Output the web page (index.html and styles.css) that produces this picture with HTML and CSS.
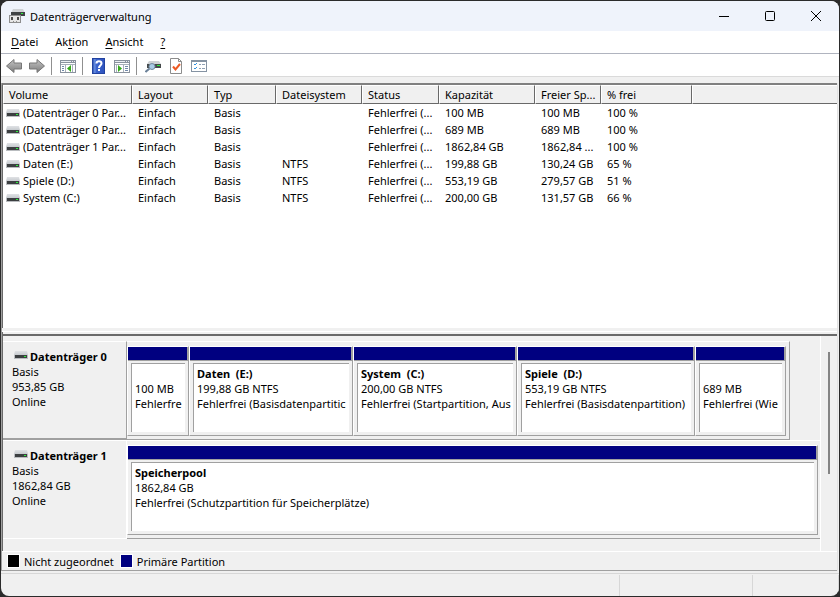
FILE: index.html
```html
<!DOCTYPE html>
<html lang="de">
<head>
  <meta charset="UTF-8" />
  <meta name="viewport" content="width=device-width, initial-scale=1.0" />
  <title>Datenträgerverwaltung</title>
  <link rel="stylesheet" href="styles.css">
</head>
<body>
  <!-- shared drive icon -->
  <svg class="defs" width="0" height="0">
    <defs>
      <linearGradient id="lid" x1="0" y1="0" x2="0" y2="1">
        <stop offset="0" stop-color="#e0e2e5" />
        <stop offset="1" stop-color="#c6cace" />
      </linearGradient>
      <linearGradient id="arrow" x1="0" y1="0" x2="0" y2="1">
        <stop offset="0" stop-color="#c4c4c4" />
        <stop offset="1" stop-color="#7c7c7c" />
      </linearGradient>
      <linearGradient id="blue" x1="0" y1="0" x2="1" y2="0">
        <stop offset="0" stop-color="#2347a8" />
        <stop offset="0.2" stop-color="#6d94e4" />
        <stop offset="0.3" stop-color="#3b64cd" />
        <stop offset="1" stop-color="#2e52bd" />
      </linearGradient>
      <symbol id="drive" viewBox="0 0 14 8">
        <path d="M1 0h12l1 4H0z" fill="url(#lid)" />
        <rect y="4" width="14" height="4" fill="#b9bcbf" />
        <rect x="1" y="4" width="12" height="3" fill="#3c3f41" />
        <rect x="10" y="5" width="2" height="1" fill="#2bf03a" />
      </symbol>
    </defs>
  </svg>

  <div class="window">
    <header class="titlebar">
      <svg class="app-icon" width="16" height="16" viewBox="0 0 16 16">
        <path d="M4 1h10l2 4H2z" fill="#cfd2d5" />
        <rect x="2" y="4" width="14" height="4" fill="#3f4244" />
        <rect x="12" y="5" width="2" height="1" fill="#2bf03a" />
        <rect x="0.500" y="7.500" width="11" height="7" fill="#e6e6e6" stroke="#8d8d8d" />
        <path d="M2 9h2v3H2zM8 9h2v3H8z" fill="#4a4a4a" />
        <path d="M4 13h1v1H4zM7 13h1v1H7z" fill="#8d8d8d" />
      </svg>
      <h1>Datenträgerverwaltung</h1>
      <div class="caption">
        <button aria-label="Minimieren"><svg width="10" height="10" viewBox="0 0 10 10"><path d="M0 5.5h10" /></svg></button>
        <button aria-label="Maximieren"><svg width="10" height="10" viewBox="0 0 10 10"><rect x="0.5" y="0.5" width="9" height="9" rx="1" /></svg></button>
        <button aria-label="Schließen"><svg width="10" height="10" viewBox="0 0 10 10"><path d="M0 0l10 10M10 0L0 10" /></svg></button>
      </div>
    </header>

    <nav class="menu">
      <button><u>D</u>atei</button>
      <button>Ak<u>t</u>ion</button>
      <button><u>A</u>nsicht</button>
      <button><u>?</u></button>
    </nav>

    <div class="toolbar">
      <button aria-label="Zurück"><svg width="16" height="16" viewBox="0 0 16 16">
        <path d="M0.5 8L8 1.5V5h7.5v6H8v3.5z" fill="url(#arrow)" stroke="#777" />
      </svg></button>
      <button aria-label="Vorwärts"><svg width="16" height="16" viewBox="0 0 16 16">
        <path d="M15.5 8L8 1.5V5H0.5v6H8v3.5z" fill="url(#arrow)" stroke="#777" />
      </svg></button>
      <span class="sep"></span>
      <button aria-label="Konsolenstruktur"><svg width="16" height="16" viewBox="0 0 16 16">
        <rect x="0.5" y="2.5" width="15" height="12" fill="#fff" stroke="#8a929e" />
        <rect x="0" y="2" width="16" height="3" fill="#8a929e" />
        <path d="M1 3.5h10M12 3.5h1M14 3.5h1" stroke="#e9edf2" />
        <path d="M1 6.5h14M5.5 7v7M12.5 7v7" stroke="#a8b0bb" />
        <path d="M2 8.5h2M2 10.5h2M2 12.5h2" stroke="#7289a9" />
        <path d="M11 7v7L7 10.5z" fill="#35a81c" />
      </svg></button>
      <span class="sep"></span>
      <button aria-label="Hilfe"><svg width="14" height="16" viewBox="0 0 14 16">
        <rect x="0.5" y="0.5" width="12" height="15" fill="url(#blue)" stroke="#2142a0" />
        <path d="M4.5 5.5C4.5 2.5 9.5 2.5 9.5 5.5C9.5 7.5 7 7.5 7 10" fill="none" stroke="#fff" stroke-width="2" />
        <rect x="6" y="11" width="2" height="2" fill="#fff" />
      </svg></button>
      <button aria-label="Aktionsbereich"><svg width="16" height="16" viewBox="0 0 16 16">
        <rect x="0.5" y="2.5" width="15" height="12" fill="#fff" stroke="#8a929e" />
        <rect x="0" y="2" width="16" height="3" fill="#8a929e" />
        <path d="M1 3.5h10M12 3.5h1M14 3.5h1" stroke="#e9edf2" />
        <path d="M1 6.5h14M2.5 7v7M9.5 7v7" stroke="#a8b0bb" />
        <path d="M11 8.5h3M11 10.5h3M11 12.5h3" stroke="#7289a9" />
        <path d="M4 7v7l4-3.5z" fill="#35a81c" />
      </svg></button>
      <span class="sep"></span>
      <button aria-label="Datenträger aktualisieren"><svg width="16" height="16" viewBox="0 0 16 16">
        <path d="M4 3h10l2 3H2z" fill="#cfd2d5" />
        <rect x="2" y="6" width="14" height="4" fill="#45494b" />
        <rect x="12" y="7" width="3" height="1" fill="#2bf03a" />
        <path d="M4.5 10.5L0.5 14" stroke="#6c8299" stroke-width="2" />
        <circle cx="7" cy="8.5" r="3" fill="#a9cbe6" stroke="#71899e" />
      </svg></button>
      <button aria-label="Eigenschaften"><svg width="14" height="16" viewBox="0 0 14 16">
        <path d="M1.5 0.5h8l3 3v12h-11z" fill="#fff" stroke="#8c8c8c" />
        <path d="M9.5 0.5v3h3" fill="none" stroke="#8c8c8c" />
        <path d="M4 8.5l2.5 3L11 6" fill="none" stroke="#ee5a24" stroke-width="2" />
      </svg></button>
      <button aria-label="Einstellungen"><svg width="16" height="16" viewBox="0 0 16 16">
        <rect x="0.5" y="2.5" width="15" height="11" fill="#fff" stroke="#8593a3" />
        <path d="M0 3h16" stroke="#8593a3" stroke-width="2" />
        <path d="M3 6l1 1 2-2M3 10l1 1 2-2" fill="none" stroke="#3192e0" />
        <path d="M8 6.5h2M11 6.5h3M8 10.5h2M11 10.5h3" stroke="#8fa0b3" />
      </svg></button>
    </div>

    <main>
      <section class="volumes">
        <table>
          <colgroup>
            <col class="c-volume"><col class="c-layout"><col class="c-type"><col class="c-fs"><col class="c-status"><col class="c-cap"><col class="c-free"><col class="c-pct"><col>
          </colgroup>
          <thead>
            <tr><th>Volume</th><th>Layout</th><th>Typ</th><th>Dateisystem</th><th>Status</th><th>Kapazität</th><th>Freier Sp...</th><th>% frei</th><th></th></tr>
          </thead>
          <tbody>
            <tr><td><svg class="drive"><use href="#drive" /></svg>(Datenträger 0 Par...</td><td>Einfach</td><td>Basis</td><td></td><td>Fehlerfrei (...</td><td>100 MB</td><td>100 MB</td><td>100 %</td><td></td></tr>
            <tr><td><svg class="drive"><use href="#drive" /></svg>(Datenträger 0 Par...</td><td>Einfach</td><td>Basis</td><td></td><td>Fehlerfrei (...</td><td>689 MB</td><td>689 MB</td><td>100 %</td><td></td></tr>
            <tr><td><svg class="drive"><use href="#drive" /></svg>(Datenträger 1 Par...</td><td>Einfach</td><td>Basis</td><td></td><td>Fehlerfrei (...</td><td>1862,84 GB</td><td>1862,84 ...</td><td>100 %</td><td></td></tr>
            <tr><td><svg class="drive"><use href="#drive" /></svg>Daten (E:)</td><td>Einfach</td><td>Basis</td><td>NTFS</td><td>Fehlerfrei (...</td><td>199,88 GB</td><td>130,24 GB</td><td>65 %</td><td></td></tr>
            <tr><td><svg class="drive"><use href="#drive" /></svg>Spiele (D:)</td><td>Einfach</td><td>Basis</td><td>NTFS</td><td>Fehlerfrei (...</td><td>553,19 GB</td><td>279,57 GB</td><td>51 %</td><td></td></tr>
            <tr><td><svg class="drive"><use href="#drive" /></svg>System (C:)</td><td>Einfach</td><td>Basis</td><td>NTFS</td><td>Fehlerfrei (...</td><td>200,00 GB</td><td>131,57 GB</td><td>66 %</td><td></td></tr>
          </tbody>
        </table>
      </section>

      <section class="graphical">
        <div class="disks">
          <div class="disk">
            <div class="disk-label">
              <h2><svg class="drive"><use href="#drive" /></svg>Datenträger 0</h2>
              <p>Basis</p>
              <p>953,85 GB</p>
              <p>Online</p>
            </div>
            <div class="partitions short">
              <div class="partition p-efi"><div class="bar"></div><div class="info"><h3></h3><p>100 MB</p><p>Fehlerfre</p></div></div>
              <div class="partition p-daten"><div class="bar"></div><div class="info"><h3>Daten &nbsp;(E:)</h3><p>199,88 GB NTFS</p><p>Fehlerfrei (Basisdatenpartitic</p></div></div>
              <div class="partition p-system"><div class="bar"></div><div class="info"><h3>System &nbsp;(C:)</h3><p>200,00 GB NTFS</p><p>Fehlerfrei (Startpartition, Aus</p></div></div>
              <div class="partition p-spiele"><div class="bar"></div><div class="info"><h3>Spiele &nbsp;(D:)</h3><p>553,19 GB NTFS</p><p>Fehlerfrei (Basisdatenpartition)</p></div></div>
              <div class="partition p-recovery"><div class="bar"></div><div class="info"><h3></h3><p>689 MB</p><p>Fehlerfrei (Wie</p></div></div>
            </div>
          </div>
          <div class="disk">
            <div class="disk-label">
              <h2><svg class="drive"><use href="#drive" /></svg>Datenträger 1</h2>
              <p>Basis</p>
              <p>1862,84 GB</p>
              <p>Online</p>
            </div>
            <div class="partitions">
              <div class="partition p-pool"><div class="bar"></div><div class="info"><h3>Speicherpool</h3><p>1862,84 GB</p><p>Fehlerfrei (Schutzpartition für Speicherplätze)</p></div></div>
            </div>
          </div>
        </div>
        <div class="scroll"><div class="thumb"></div></div>
      </section>

      <div class="legend">
        <span class="swatch unallocated"></span>Nicht zugeordnet
        <span class="swatch primary"></span>Primäre Partition
      </div>
    </main>

    <footer class="status"><span></span><span></span><span></span></footer>
  </div>
</body>
</html>
```
FILE: styles.css
```css
:root {
  --face: #f0f0f0;
  --shadow: #a0a0a0;
  --dark: #696969;
  --navy: #000080;
}
* {
  box-sizing: border-box;
}
body {
  margin: 0;
  padding: 1px;
  min-height: 100vh;
  display: flex;
  background: #2b2b2b;
  color: #000;
  font-family: 'Noto Sans', sans-serif;
  font-size: 11px;
  line-height: 15px;
}
h1, h2, h3, p {
  margin: 0;
  font-size: 11px;
}
button {
  padding: 0;
  border: 0;
  background: none;
  color: inherit;
  font: inherit;
}
.defs {
  position: absolute;
}
.window {
  flex: 1;
  min-width: 0;
  display: flex;
  flex-direction: column;
  border-radius: 8px;
  overflow: hidden;
  background: var(--face);
}

/* title bar */
.titlebar {
  height: 30px;
  display: flex;
  align-items: center;
  padding-left: 8px;
  background: #eff3fb;
}
.titlebar h1 {
  flex: 1;
  margin-left: 5px;
  font-weight: normal;
}
.caption {
  display: flex;
}
.caption button {
  width: 46px;
  height: 30px;
  display: flex;
  align-items: center;
  justify-content: center;
}
.caption svg {
  fill: none;
  stroke: #000;
}

/* menu and toolbar */
.menu {
  height: 23px;
  display: flex;
  gap: 17px;
  padding: 0 10px 2px;
  background: #fff;
  border-bottom: 1px solid #b0b4bf;
}
.menu u {
  text-underline-offset: 2px;
}
.toolbar {
  height: 23px;
  display: flex;
  align-items: center;
  padding: 2px 0 0 1px;
  background: #fff;
  border-bottom: 1px solid #dadada;
}
.toolbar button {
  width: 23px;
  height: 20px;
  display: flex;
  align-items: center;
  justify-content: center;
}
.sep {
  width: 1px;
  height: 18px;
  margin: 0 4px 0 3px;
  background: #909090;
}

/* content */
main {
  flex: 1;
  display: flex;
  flex-direction: column;
  margin: 6px 1px 0 0;
  border-left: 1px solid var(--shadow);
  border-right: 1px solid #e3e3e3;
}
.volumes {
  flex: 1;
  background: #fff;
  border-top: 2px solid #808080;
  border-left: 1px solid var(--dark);
}
table {
  width: 100%;
  table-layout: fixed;
  border-collapse: separate;
  border-spacing: 0;
}
.c-volume { width: 129px; }
.c-layout { width: 76px; }
.c-type { width: 68px; }
.c-fs { width: 86px; }
.c-status { width: 77px; }
.c-cap { width: 96px; }
.c-free { width: 66px; }
.c-pct { width: 91px; }
th, td {
  padding: 0 0 0 6px;
  text-align: left;
  font-weight: normal;
  white-space: nowrap;
  overflow: hidden;
}
th {
  height: 19px;
  padding-left: 5px;
  background: var(--face);
  border-left: 1px solid #fff;
  border-top: 1px solid #fff;
  border-right: 1px solid var(--dark);
  border-bottom: 1px solid var(--dark);
}
th:last-child {
  border-right: 0;
}
td {
  height: 17px;
}
td:first-child {
  padding-left: 3px;
}
.drive {
  width: 14px;
  height: 8px;
  margin-right: 3px;
}

/* disk graphics */
.graphical {
  display: flex;
  margin-top: 3px;
  border-top: 1px solid #fff;
}
.graphical::before {
  content: "";
  width: 1px;
  background: var(--dark);
}
.disks {
  flex: 1;
  min-width: 0;
  margin: 2px -17px 0 0;
  padding: 5px 17px 12px 0;
  border-top: 2px solid var(--dark);
}
.disk {
  height: 99px;
  display: flex;
}
.disk-label {
  width: 124px;
  padding: 7px 0 0 9px;
  border-top: 1px solid #fff;
  border-right: 1px solid var(--shadow);
  border-bottom: 2px solid var(--shadow);
}
.disk:last-child .disk-label {
  border-right-color: #fff;
  border-bottom: 1px solid #fff;
}
.disk-label h2 {
  padding-left: 2px;
}
.disk-label .drive {
  margin-right: 2px;
  vertical-align: 2px;
}
.partitions {
  flex: 1;
  min-width: 0;
  display: flex;
  padding: 4px 2px 3px 0;
  border-top: 1px solid #fff;
  border-bottom: 1px solid var(--shadow);
}
.partitions.short {
  margin-right: 30px;
  padding-right: 3px;
  border-right: 1px solid var(--shadow);
}
.partition {
  min-width: 0;
  flex-basis: 0;
  display: flex;
  flex-direction: column;
  border: 1px solid #fff;
  border-right-color: var(--shadow);
  border-bottom-color: var(--shadow);
}
.p-efi { flex-grow: 60; }
.p-daten { flex-grow: 162; }
.p-system { flex-grow: 162; }
.p-spiele { flex-grow: 176; }
.p-recovery { flex-grow: 89; }
.p-pool { flex-grow: 1; }
.bar {
  height: 14px;
  background: var(--navy);
  border-right: 1px solid var(--shadow);
  border-bottom: 1px solid var(--shadow);
}
.info {
  flex: 1;
  margin: 2px 3px 3px;
  padding: 2px 2px 0 3px;
  background: #fff;
  border-top: 1px solid var(--shadow);
  border-left: 1px solid var(--shadow);
  white-space: nowrap;
}
.info h3 {
  min-height: 15px;
}
.info h3, .info p {
  overflow: hidden;
}
.scroll {
  width: 17px;
  margin-top: 4px;
  padding: 16px 7px 0;
  border-left: 1px solid #fff;
}
.thumb {
  width: 2px;
  height: 122px;
  background: #858585;
}

/* legend and status bar */
.legend {
  height: 20px;
  display: flex;
  align-items: center;
  padding-left: 6px;
  border-top: 1px solid #fff;
  border-bottom: 1px solid var(--shadow);
}
.swatch {
  width: 11px;
  height: 12px;
  margin-right: 5px;
  outline: 1px solid #fff;
}
.unallocated {
  background: #000;
}
.primary {
  margin-left: 7px;
  background: var(--navy);
}
.status {
  height: 23px;
  display: flex;
  margin-top: 2px;
  padding-top: 1px;
  border-top: 1px solid #d7d7d7;
}
.status span {
  flex: 1;
  border-right: 1px solid #d7d7d7;
}
.status span:nth-child(2) {
  flex: 0 0 133px;
}
.status span:last-child {
  flex: 0 0 86px;
}
```
